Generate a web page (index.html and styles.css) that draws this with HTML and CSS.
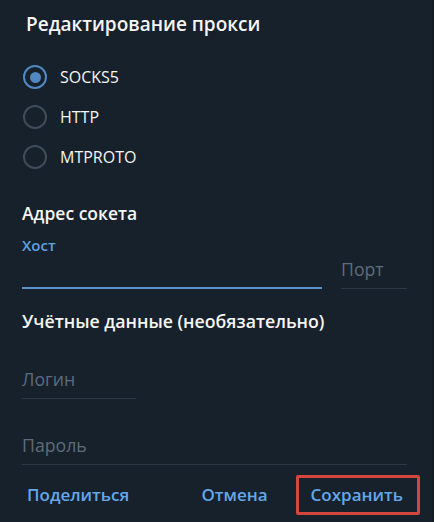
FILE: index.html
```html
<!DOCTYPE html>
<html lang="ru">
<head>
<meta charset="utf-8">
<title>Редактирование прокси</title>
<link rel="stylesheet" href="styles.css">
</head>
<body>
<div class="dialog">
  <h1 class="title">Редактирование прокси</h1>
  <div class="radios">
    <label class="radio checked"><span class="dot"></span><span class="rlabel">SOCKS5</span></label>
    <label class="radio"><span class="dot"></span><span class="rlabel">HTTP</span></label>
    <label class="radio"><span class="dot"></span><span class="rlabel">MTPROTO</span></label>
  </div>
  <h2 class="section">Адрес сокета</h2>
  <div class="row">
    <div class="field host active">
      <div class="flabel">Хост</div>
      <div class="fvalue"></div>
    </div>
    <div class="field port">
      <div class="fvalue ph">Порт</div>
    </div>
  </div>
  <h2 class="section creds">Учётные данные (необязательно)</h2>
  <div class="field login">
    <div class="fvalue ph">Логин</div>
  </div>
  <div class="field password">
    <div class="fvalue ph">Пароль</div>
  </div>
  <div class="footer">
    <button class="btn share">Поделиться</button>
    <span class="spacer"></span>
    <button class="btn cancel">Отмена</button>
    <button class="btn save">Сохранить</button>
  </div>
</div>
</body>
</html>
```

FILE: styles.css
```css
html, body {
  margin: 0;
  padding: 0;
  background: #17212b;
}
body {
  width: 434px;
  height: 522px;
  overflow: hidden;
  font-family: "Open Sans", "Noto Sans", sans-serif;
  color: #f5f5f5;
  border-right: 2px solid #131b23;
  box-sizing: border-box;
}
.dialog {
  display: flex;
  flex-direction: column;
  padding: 0 0 0 22px;
}
.title {
  margin: 8px 0 0 4px;
  font-size: 19px;
  font-weight: 600;
  line-height: 32px;
  color: #f5f5f5;
}
.radios {
  display: flex;
  flex-direction: column;
  margin-top: 17px;
}
.radio {
  display: flex;
  align-items: center;
  height: 40px;
  padding-left: 1px;
}
.dot {
  width: 20px;
  height: 20px;
  border: 2px solid #3f4c5a;
  border-radius: 50%;
  display: flex;
  align-items: center;
  justify-content: center;
  flex: none;
}
.checked .dot {
  border-color: #5288c1;
}
.checked .dot::after {
  content: "";
  width: 11px;
  height: 11px;
  border-radius: 50%;
  background: #5288c1;
}
.rlabel {
  margin-left: 13px;
  font-size: 16px;
  color: #f5f5f5;
}
.section {
  margin: 24px 0 0 0;
  font-size: 17.5px;
  font-weight: 600;
  line-height: 24px;
  color: #f5f5f5;
}
.row {
  display: flex;
  gap: 19px;
  align-items: flex-end;
}
.field {
  display: flex;
  flex-direction: column;
}
.host {
  width: 300px;
}
.port {
  width: 66px;
}
.flabel {
  margin-top: 10px;
  font-size: 15px;
  font-weight: 600;
  line-height: 20px;
  color: #5fa1de;
}
.fvalue {
  height: 34px;
  border-bottom: 1px solid #2c3845;
  font-size: 17.7px;
  line-height: 30px;
}
.host .fvalue {
  height: 32px;
  border-bottom: 2px solid #5b93cc;
}
.ph {
  color: #5d6c7b;
}
.creds {
  margin-top: 20px;
  font-size: 17.7px;
}
.login {
  width: 114px;
  margin-top: 31px;
}
.password {
  width: 385px;
  margin-top: 31px;
}
.footer {
  display: flex;
  align-items: center;
  margin: 10px 12px 0 0;
}
.spacer {
  flex: 1;
}
.btn {
  background: none;
  border: 0;
  padding: 0;
  font-family: "Open Sans", "Noto Sans", sans-serif;
  font-size: 17px;
  font-weight: 600;
  color: #63a7ea;
  line-height: 34px;
}
.share {
  margin-left: 5px;
}
.cancel {
  margin-right: 28px;
}
.save {
  border: 3px solid #d2463d;
  border-radius: 2px;
  padding: 0 14px 0 12px;
}
```
